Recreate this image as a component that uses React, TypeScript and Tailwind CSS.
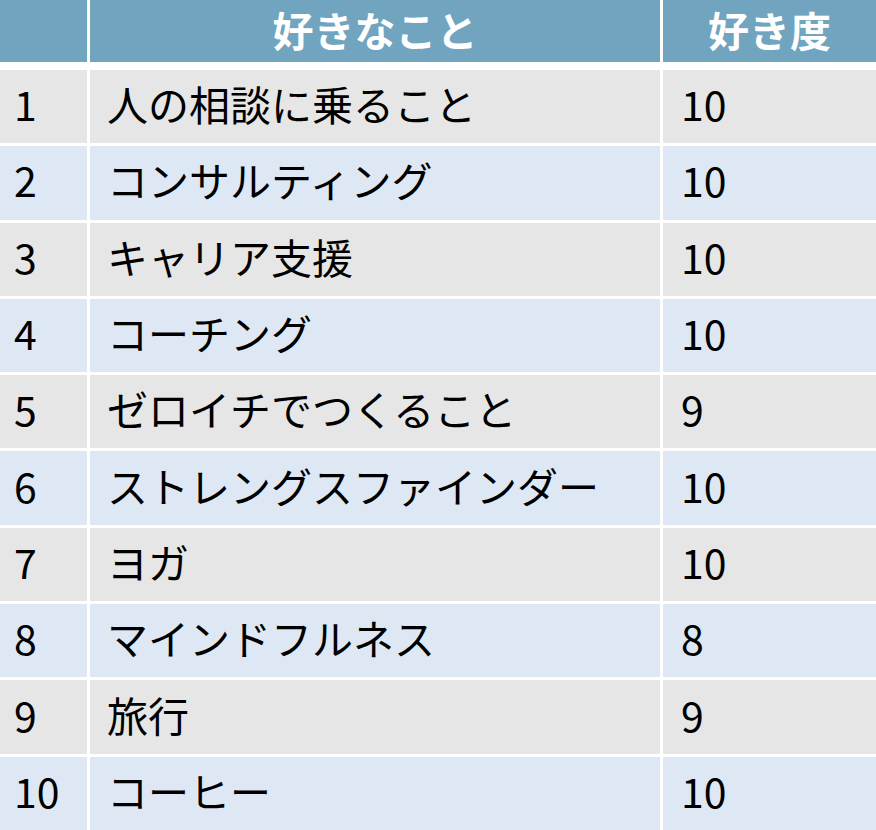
const rows: { no: number; item: string; score: number }[] = [
  { no: 1, item: "人の相談に乗ること", score: 10 },
  { no: 2, item: "コンサルティング", score: 10 },
  { no: 3, item: "キャリア支援", score: 10 },
  { no: 4, item: "コーチング", score: 10 },
  { no: 5, item: "ゼロイチでつくること", score: 9 },
  { no: 6, item: "ストレングスファインダー", score: 10 },
  { no: 7, item: "ヨガ", score: 10 },
  { no: 8, item: "マインドフルネス", score: 8 },
  { no: 9, item: "旅行", score: 9 },
  { no: 10, item: "コーヒー", score: 10 },
];

const font = {
  fontFamily: '"Noto Sans CJK JP", "Noto Sans", sans-serif',
};

export default function App() {
  return (
    <div
      className="flex h-[830px] w-[876px] flex-col overflow-hidden bg-white text-black"
      style={font}
    >
      {/* header */}
      <div className="grid h-[62px] grid-cols-[87px_570px_213px] gap-x-[3px] text-[41px] font-bold leading-none text-white">
        <div className="bg-[#71a4bf]" />
        <div className="flex items-center justify-center bg-[#71a4bf] pb-[4px]">
          好きなこと
        </div>
        <div className="flex items-center justify-center bg-[#71a4bf] pb-[4px]">
          好き度
        </div>
      </div>

      <div className="mt-[8px] flex flex-1 flex-col gap-[3px]">
        {rows.map((r, i) => {
          const bg = i % 2 === 0 ? "bg-[#e6e6e6]" : "bg-[#dee8f4]";
          return (
            <div
              key={r.no}
              className="grid flex-1 grid-cols-[87px_570px_213px] gap-x-[3px] text-[41px] leading-none"
            >
              <div className={`flex items-center pb-[6px] pl-[14px] ${bg}`}>
                {r.no}
              </div>
              <div className={`flex items-center pb-[6px] pl-[17px] ${bg}`}>
                {r.item}
              </div>
              <div className={`flex items-center pb-[6px] pl-[18px] ${bg}`}>
                {r.score}
              </div>
            </div>
          );
        })}
      </div>
    </div>
  );
}
